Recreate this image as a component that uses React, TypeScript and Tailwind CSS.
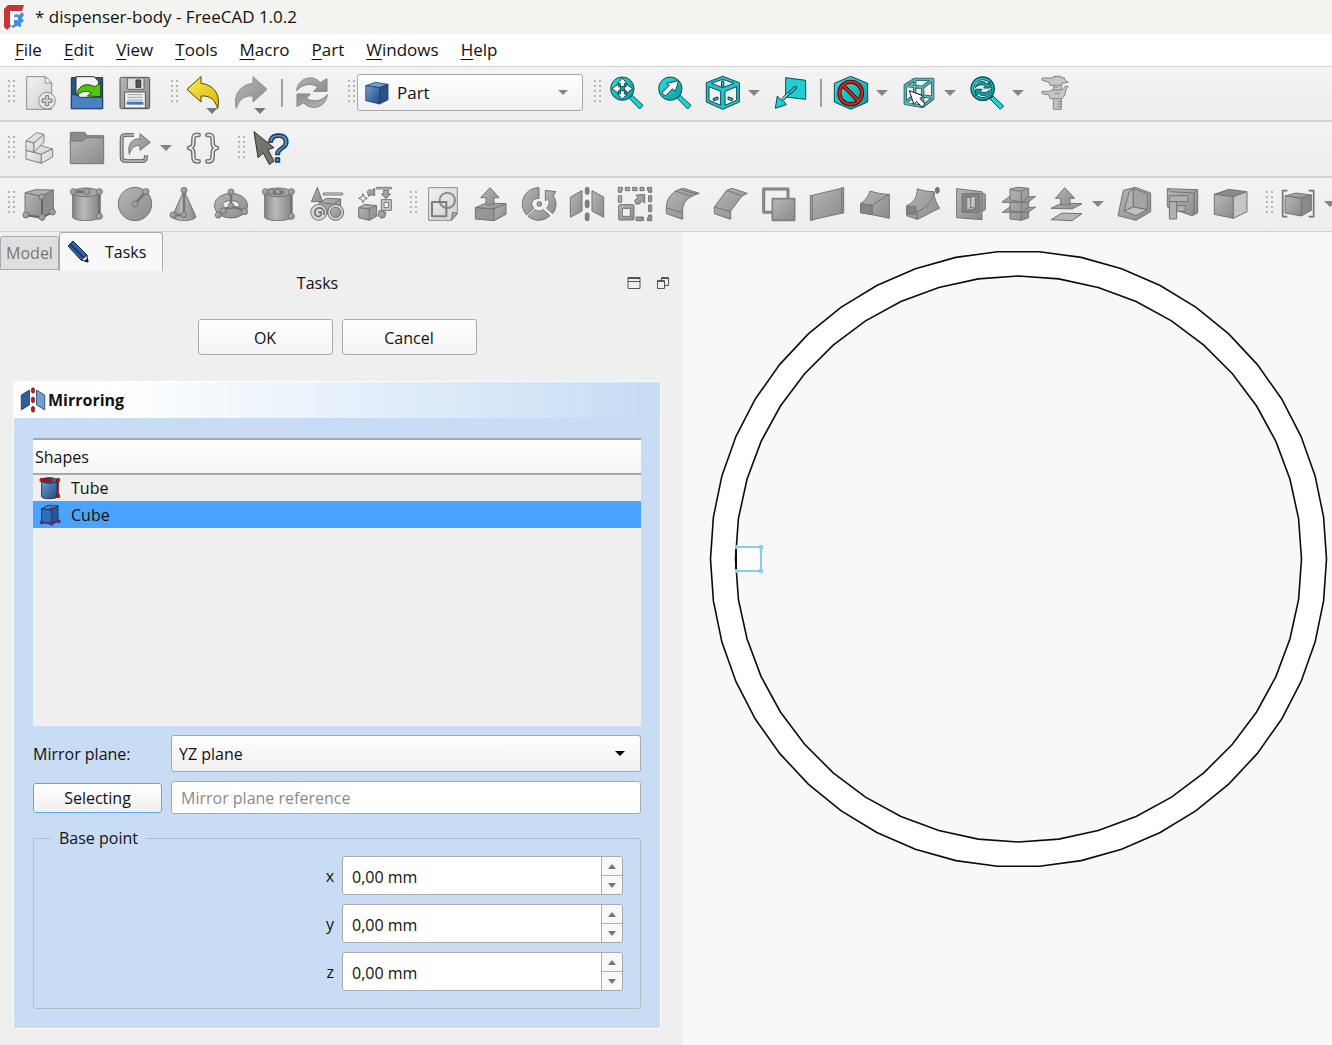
import React, { useState } from 'react';

type IconProps = { children: React.ReactNode; className?: string };

// Every drawing uses a 102 unit grid, three units for each pixel at the toolbar size
const Icon: React.FC<IconProps> = ({ children, className = 'size-[34px]' }) => (
  <svg
    viewBox="0 0 102 102"
    className={`${className} shrink-0 overflow-visible`}
    fill="url(#steel)"
    stroke="#747474"
    strokeWidth={3}
    strokeLinejoin="round"
    aria-hidden="true"
  >
    {children}
  </svg>
);

const Gradients: React.FC = () => (
  <svg className="absolute size-0" aria-hidden="true">
    <defs>
      <linearGradient id="steel" x1="0" y1="0" x2="1" y2="1">
        <stop offset="0" stopColor="#b6b6b6" />
        <stop offset="1" stopColor="#8b8b8b" />
      </linearGradient>
      <linearGradient id="silver" x1="0" y1="0" x2="1" y2="1">
        <stop offset="0" stopColor="#f2f2f2" />
        <stop offset="1" stopColor="#cfcfcf" />
      </linearGradient>
      <linearGradient id="drum" x1="0" y1="0" x2="1" y2="0">
        <stop offset="0" stopColor="#858585" />
        <stop offset="0.4" stopColor="#bababa" />
        <stop offset="1" stopColor="#868686" />
      </linearGradient>
      <linearGradient id="teal" x1="0" y1="0" x2="1" y2="1">
        <stop offset="0" stopColor="#34e0e2" />
        <stop offset="1" stopColor="#06989a" />
      </linearGradient>
      <linearGradient id="blue" x1="0" y1="0" x2="1" y2="1">
        <stop offset="0" stopColor="#6d9ed4" />
        <stop offset="1" stopColor="#23497f" />
      </linearGradient>
      <linearGradient id="gold" x1="0" y1="0" x2="1" y2="1">
        <stop offset="0" stopColor="#fce94f" />
        <stop offset="1" stopColor="#d9b70c" />
      </linearGradient>
    </defs>
  </svg>
);

const TEAL = '#0b4a50';

const lens = (
  <>
    <path d="M58 67L67 58L99 88L89 99Z" fill="#1fd0d2" stroke={TEAL} />
    <circle cx="37" cy="38" r="35" fill="url(#teal)" stroke={TEAL} />
  </>
);

const syncArrow = 'M5 44C8 8 52 -8 76 20L96 8V46H56L68 33C48 20 22 24 5 44Z';

const drum = (
  <>
    <path d="M8 16V90C8 104 88 104 88 90V16Z" fill="url(#drum)" />
    <ellipse cx="48" cy="16" rx="40" ry="13" fill="#a5a5a5" />
  </>
);

const icons: Record<string, React.ReactNode> = {
  newDoc: (
    <>
      <path d="M14 2H70L89 21V100H14Z" fill="url(#silver)" stroke="#8c8c8c" />
      <path d="M70 2V21H89Z" fill="#fff" stroke="#8c8c8c" />
      <circle cx="75" cy="74" r="25" fill="#e9e9e9" stroke="#8c8c8c" />
      <path d="M70 59H80V69H90V79H80V89H70V79H60V69H70Z" fill="#ccc" stroke="#777" />
    </>
  ),
  open: (
    <>
      <path d="M4 5H98V98H4Z" fill="#2c5288" stroke="#1b2f4f" />
      <path d="M18 2H72L86 16V66H18Z" fill="#f4f4f4" stroke="#333" />
      <path d="M4 56H24L30 64H98V98H4Z" fill="#4b80c2" stroke="#1f3f6d" />
      <path d="M20 60C22 30 46 18 74 32L92 22V62L52 60L64 50C48 42 32 46 20 60Z" fill="#4fc50d" stroke="#1d4f00" />
    </>
  ),
  save: (
    <>
      <rect x="6" y="4" width="89" height="94" rx="5" fill="url(#steel)" stroke="#555" />
      <rect x="28" y="6" width="50" height="34" rx="3" fill="#ddd" stroke="#666" />
      <rect x="54" y="12" width="14" height="22" fill="#555" stroke="#333" />
      <rect x="20" y="48" width="62" height="48" fill="#f5f5f5" stroke="#555" />
      <path d="M28 56H74M28 64H74M28 72H74" stroke="#999" />
      <rect x="26" y="77" width="50" height="9" fill="#3c78c4" stroke="none" />
    </>
  ),
  undo: (
    <>
      <path d="M0 40L42 2V22C80 26 102 56 92 97C84 72 70 58 42 60V78Z" fill="url(#gold)" stroke="#4f4300" />
      <path d="M58 96H92L75 114Z" fill="#777" stroke="none" />
    </>
  ),
  redo: (
    <>
      <path d="M96 40L54 2V22C16 26 -6 56 4 97C12 72 26 58 54 60V78Z" fill="url(#steel)" stroke="#8d8d8d" />
      <path d="M58 96H92L75 114Z" fill="#777" stroke="none" />
    </>
  ),
  refresh: (
    <>
      <path d={syncArrow} stroke="#858585" />
      <path d={syncArrow} stroke="#858585" transform="rotate(180 51 50)" />
    </>
  ),
  fitAll: (
    <>
      {lens}
      <path
        d="M37 6L51 22H43V32H49V24L68 38L49 52V44H43V54H51L37 70L23 54H31V44H25V52L6 38L25 24V32H31V22H23Z"
        fill="#fff"
        stroke={TEAL}
      />
      <rect x="31" y="32" width="12" height="12" fill="#16a5a7" stroke={TEAL} />
    </>
  ),
  fitSelection: (
    <>
      {lens}
      <path d="M62 14L52 46L44 38L22 60L12 50L34 28L26 22Z" fill="#fff" stroke={TEAL} />
    </>
  ),
  isometric: (
    <>
      <path d="M50 1L100 20V78L50 100L1 78V20Z" fill="#1fc7ca" stroke={TEAL} />
      <path d="M50 10L84 22L50 35L16 22Z" fill="#f2f2f2" stroke={TEAL} />
      <path d="M9 32L44 46V88L9 73Z" fill="#f2f2f2" stroke={TEAL} />
      <path d="M92 32L57 46V88L92 73Z" fill="#f2f2f2" stroke={TEAL} />
      <path d="M50 18V30M25 70L33 67M69 67L77 70" stroke={TEAL} strokeWidth="10" strokeLinecap="round" />
      <path d="M50 18V30M25 70L33 67M69 67L77 70" stroke="#1fc7ca" strokeWidth="4" strokeLinecap="round" />
    </>
  ),
  linkPlane: (
    <>
      <path d="M35 5L95 13V70L35 63Z" fill="#20cfd2" stroke={TEAL} />
      <path d="M64 35L48 50" stroke={TEAL} strokeWidth="11" strokeLinecap="round" />
      <path d="M64 35L48 50" stroke="#20cfd2" strokeWidth="5" strokeLinecap="round" />
      <path d="M44 52L26 70" stroke={TEAL} strokeWidth="10" />
      <path d="M44 52L26 70" stroke="#8eeeee" strokeWidth="4" />
      <path d="M4 97L10 60L18 69L28 74L37 86Z" fill="#20cfd2" stroke={TEAL} />
    </>
  ),
  noEntry: (
    <>
      <path d="M50 1L101 22V78L50 100L1 78V22Z" fill="url(#teal)" stroke={TEAL} />
      <circle cx="50" cy="51" r="34" fill="none" stroke="#280000" strokeWidth="12" />
      <path d="M27 28L73 74" stroke="#280000" strokeWidth="12" />
      <circle cx="50" cy="51" r="34" fill="none" stroke="#e02020" strokeWidth="7" />
      <path d="M27 28L73 74" stroke="#e02020" strokeWidth="7" />
    </>
  ),
  selectCube: (
    <>
      <g fill="none" stroke="#1e5c60" strokeWidth="10">
        <path d="M10 28L62 34V91L10 82ZM10 28L38 10L92 10L62 34M92 10V68L62 91M38 10V56L10 82M38 56L92 64" />
      </g>
      <g fill="none" stroke="#63b5b5" strokeWidth="5">
        <path d="M10 28L62 34V91L10 82ZM10 28L38 10L92 10L62 34M92 10V68L62 91M38 10V56L10 82M38 56L92 64" />
      </g>
      <path d="M22 44L64 60L54 67L69 84L59 93L44 76L36 86Z" fill="#fff" stroke="#222" />
    </>
  ),
  zoomSync: (
    <>
      <path d="M60 69L69 60L101 90L91 100Z" fill="#1fd0d2" stroke={TEAL} />
      <circle cx="38" cy="38" r="35" fill="url(#teal)" stroke={TEAL} strokeWidth="4" />
      <circle cx="38" cy="38" r="27" fill="#d5f4f4" stroke={TEAL} />
      <g transform="translate(14 14) scale(0.48)" fill="#14a0a3" stroke={TEAL} strokeWidth="6">
        <path d={syncArrow} />
        <path d={syncArrow} transform="rotate(180 51 50)" />
      </g>
    </>
  ),
  caliper: (
    <g fill="#c6c6c6" stroke="#858585">
      <path d="M46 2H70V100H46Z" />
      <path d="M12 6H46L50 1H66L72 7L78 4L82 14L91 18L82 21H72V28H36L32 18L12 13Z" />
      <path d="M12 46H34L38 42H72L82 30L91 32L84 40L80 58L72 68H36L32 56L12 53Z" />
      <path d="M50 34H60M50 52H66M58 76H70M58 84H70M58 92H70" />
    </g>
  ),
  assembly: (
    <g fill="url(#silver)" stroke="#808080">
      <path d="M12 58L50 42L92 54L58 70Z" />
      <path d="M12 58L58 70V97L12 84Z" />
      <path d="M58 70L92 54V78L58 97Z" />
      <path d="M12 30L44 5L66 10L36 36Z" />
      <path d="M12 30L36 36V64L12 58Z" />
      <path d="M36 36L66 10V34L36 64Z" />
    </g>
  ),
  folder: (
    <>
      <path d="M1 4H44L52 14H100V40H1Z" fill="#8a8a8a" />
      <path d="M1 30H38L50 20H101V98H1Z" fill="url(#steel)" />
    </>
  ),
  share: (
    <>
      <path d="M48 12H22C14 12 11 16 11 24V78C11 86 15 90 24 90H72C80 90 84 86 84 78V72" fill="none" strokeWidth="12" />
      <path d="M48 12H22C14 12 11 16 11 24V78C11 86 15 90 24 90H72C80 90 84 86 84 78V72" fill="none" stroke="#bbb" strokeWidth="4" />
      <path d="M34 70C28 42 40 22 66 24V8L97 34L66 58V44C50 42 40 50 34 70Z" />
    </>
  ),
  braces: (
    <g fill="none" strokeLinecap="round">
      <path
        d="M38 12C24 10 22 16 22 26V36C22 44 18 50 9 51C18 52 22 58 22 66V76C22 88 26 92 38 91M64 12C78 10 80 16 80 26V36C80 44 84 50 93 51C84 52 80 58 80 66V76C80 88 76 92 64 91"
        strokeWidth="14"
      />
      <path
        d="M38 12C24 10 22 16 22 26V36C22 44 18 50 9 51C18 52 22 58 22 66V76C22 88 26 92 38 91M64 12C78 10 80 16 80 26V36C80 44 84 50 93 51C84 52 80 58 80 66V76C80 88 76 92 64 91"
        stroke="#eee"
        strokeWidth="5"
      />
    </g>
  ),
  whatsThis: (
    <>
      <path d="M0 2L60 50L42 56L60 90L46 101L28 66L12 80Z" fill="#74746e" stroke="#33332f" />
      <text
        x="39"
        y="94"
        className="font-['Liberation_Sans',sans-serif] text-[120px] font-normal"
        fill="#5d92cf"
        stroke="#16325a"
        strokeWidth="4"
      >
        ?
      </text>
    </>
  ),
  box: (
    <>
      <path d="M9 17L40 8L94 9L60 28Z" fill="#b0b0b0" />
      <path d="M9 17L60 28V94L9 84Z" />
      <path d="M60 28L94 9V72L60 94Z" fill="#8f8f8f" />
      <path d="M60 30V92M12 84L60 92L92 75" fill="none" stroke="#666" strokeWidth="6" />
      <circle cx="12" cy="84" r="9" />
      <circle cx="60" cy="91" r="9" />
      <circle cx="91" cy="75" r="9" />
      <circle cx="60" cy="30" r="9" />
    </>
  ),
  cylinder: (
    <>
      {drum}
      <path d="M10 14H50M88 14V88" strokeWidth="9" />
      <circle cx="10" cy="14" r="9" />
      <circle cx="50" cy="14" r="9" />
      <circle cx="88" cy="14" r="9" />
      <circle cx="88" cy="88" r="9" />
    </>
  ),
  sphere: (
    <>
      <circle cx="51" cy="51" r="50" />
      <path d="M51 51L84 14" strokeWidth="8" />
      <circle cx="51" cy="51" r="9" />
      <circle cx="84" cy="14" r="9" />
    </>
  ),
  cone: (
    <>
      <path d="M54 10L90 90C82 104 28 104 18 90Z" fill="url(#drum)" />
      <path d="M54 12V84H21" fill="none" strokeWidth="7" />
      <circle cx="54" cy="10" r="9" />
      <circle cx="54" cy="84" r="9" />
      <circle cx="21" cy="84" r="9" />
    </>
  ),
  torus: (
    <>
      <ellipse cx="51" cy="56" rx="50" ry="37" />
      <ellipse cx="51" cy="53" rx="25" ry="12" fill="#eee" />
      <path d="M51 15V56L98 74M51 56L28 72L14 84" fill="none" strokeWidth="7" />
      <circle cx="51" cy="15" r="9" />
      <circle cx="51" cy="56" r="8" />
      <circle cx="92" cy="74" r="9" />
      <circle cx="28" cy="72" r="9" />
      <circle cx="13" cy="84" r="9" />
    </>
  ),
  tube: (
    <>
      {drum}
      <ellipse cx="48" cy="16" rx="18" ry="7" fill="#777" />
      <path d="M88 14V88M10 14H50" strokeWidth="8" />
      <circle cx="10" cy="14" r="9" />
      <circle cx="28" cy="14" r="8" />
      <circle cx="48" cy="14" r="8" />
      <circle cx="88" cy="14" r="9" />
      <circle cx="88" cy="88" r="9" />
    </>
  ),
  primitives: (
    <>
      <path d="M22 1L38 44H4Z" />
      <path d="M40 18H98V24H40Z" fill="#ddd" />
      <path d="M28 46L50 34L92 36V80H28Z" />
      <path d="M28 46L72 52L92 36" fill="none" />
      <circle cx="26" cy="76" r="24" fill="#d5d5d5" />
      <path d="M26 78C32 68 40 82 28 88C14 92 8 70 24 63C38 60 46 74 42 84" fill="none" strokeWidth="5" />
      <circle cx="77" cy="76" r="24" fill="#aaa" />
      <circle cx="77" cy="76" r="19" fill="#aaa" stroke="#e6e6e6" strokeWidth="4" />
      <circle cx="77" cy="76" r="16" />
    </>
  ),
  shapeBuilder: (
    <>
      <path d="M2 62L20 52L56 56V88L34 100L2 92Z" />
      <path d="M2 62L34 66L56 56M34 66V100" fill="none" />
      <path d="M15 20L19 30L28 34L19 38L15 47L11 38L2 34L11 30Z" fill="#f2f2f2" />
      <path d="M28 14L34 7L40 11L50 4L50 26L41 23L32 28Z" />
      <path d="M56 1H100V6H56Z" fill="#ddd" />
      <path d="M77 10H91V21H98L84 35L70 21H77Z" />
      <path d="M70 38H100V70H70Z" fill="#ccc" />
      <path d="M78 46H92V62H78Z" fill="#f2f2f2" />
      <path d="M64 70L84 76L80 90L70 94L60 86Z" />
    </>
  ),
  sketch: (
    <>
      <path d="M8 2H94V80L76 100H8Z" fill="url(#silver)" stroke="#8a8a8a" />
      <path d="M94 80L76 100L80 76Z" fill="#aaa" />
      <circle cx="64" cy="40" r="23" fill="none" stroke="#8a8a8a" strokeWidth="6" />
      <rect x="18" y="45" width="43" height="43" fill="none" stroke="#7d7d7d" strokeWidth="6" />
    </>
  ),
  extrude: (
    <>
      <path d="M4 62L36 48L96 50L60 66Z" />
      <path d="M4 62L60 66V101L4 96Z" fill="#969696" />
      <path d="M60 66L96 50V82L60 101Z" />
      <path d="M48 2L75 32H60V54H36V32H20Z" />
    </>
  ),
  revolve: (
    <>
      <path d="M51 2C20 2 1 26 1 50C1 64 6 76 14 84L36 64C30 58 28 52 30 46C32 38 40 34 51 34Z" />
      <path d="M18 88C38 104 64 104 84 86L64 68C54 74 48 74 40 68Z" />
      <path d="M92 80C104 64 106 46 94 26L102 14L70 10L70 42L78 34C84 46 82 54 74 64Z" />
      <circle cx="52" cy="51" r="7" />
    </>
  ),
  mirror: (
    <>
      <path d="M1 30L36 11V72L1 91Z" />
      <path d="M101 30L66 11V72L101 91Z" />
      <rect x="46" y="1" width="11" height="21" rx="5" fill="#808080" />
      <rect x="46" y="39" width="11" height="23" rx="5" fill="#808080" />
      <rect x="46" y="78" width="11" height="23" rx="5" fill="#808080" />
    </>
  ),
  scale: (
    <>
      <path d="M1 1H13V10H10V16H1ZM22 1H35V11H22ZM44 1H57V11H44ZM66 1H78V11H66ZM88 1H101V16H92V10H88Z" />
      <path d="M1 26H11V46H1ZM92 26H101V44H92ZM92 54H101V74H92ZM88 101V92H92V84H101V101ZM54 90H76V101H54Z" />
      <rect x="2" y="53" width="46" height="46" rx="3" />
      <rect x="13" y="64" width="24" height="24" fill="#eee" />
      <path d="M80 22V48L73 42L64 51L54 51L50 40L60 33L54 24Z" />
    </>
  ),
  fillet: (
    <>
      <path d="M1 62C1 32 22 10 52 4L100 19C72 26 52 42 50 66V97L1 80Z" />
      <path d="M1 62L50 78M26 12L80 28M40 7L92 21" fill="none" />
    </>
  ),
  chamfer: (
    <>
      <path d="M1 60L38 10L54 4L100 19L84 27L50 72V97L1 80Z" />
      <path d="M1 60L50 74M38 10L84 27" fill="none" />
    </>
  ),
  face: (
    <>
      <path d="M5 6H78V76H5Z" fill="none" stroke="#767676" strokeWidth="9" />
      <path d="M5 6H78V76H5Z" fill="none" stroke="#999" strokeWidth="3" />
      <rect x="31" y="35" width="67" height="65" stroke="#808080" strokeWidth="5" />
    </>
  ),
  ruled: (
    <>
      <path d="M3 26L98 3V78L3 99Z" />
      <path d="M1 26H7V100H1ZM95 2H101V78H95Z" />
    </>
  ),
  loft: (
    <>
      <path d="M8 50C20 42 32 28 36 12C54 18 74 22 94 22V94L42 83L8 77Z" />
      <path d="M8 50L42 55L94 22M42 55V83" fill="none" />
      <path d="M8 50L42 55V83L8 77Z" fill="#858585" />
    </>
  ),
  sweep: (
    <>
      <path d="M2 56C26 46 34 26 34 5C50 12 68 14 84 14C84 34 92 50 101 64C84 70 56 88 34 97L2 86Z" />
      <path d="M34 97V74L2 60M34 74C60 64 80 42 84 14" fill="none" />
      <rect x="5" y="58" width="24" height="24" fill="#858585" />
      <ellipse cx="94" cy="10" rx="6" ry="9" fill="#777" />
    </>
  ),
  section: (
    <>
      <path d="M76 14L94 22V68L76 78Z" />
      <path d="M8 5L84 14V98L8 92Z" />
      <path d="M24 20H76V76H24Z" fill="#858585" />
      <path d="M38 32L64 28V64L38 72Z" fill="#c4c4c4" />
      <path d="M38 72L50 60L64 64M50 60V30" fill="none" />
    </>
  ),
  crossSections: (
    <>
      <path d="M24 6L48 1L80 4V92L58 100L24 96Z" />
      <path d="M24 8L58 13L80 4M58 13V100" fill="none" />
      <path d="M1 44L24 28V38L58 46L80 30L101 28L78 46H1Z" />
      <path d="M1 76L24 60V70L58 76L80 62L101 60L78 76H1Z" />
    </>
  ),
  offset: (
    <>
      <path d="M3 64L36 48L96 50L66 66Z" />
      <path d="M3 98L36 78L96 80L66 101Z" fill="#b5b5b5" />
      <path d="M44 2L74 34H60V54H32V34H16Z" />
    </>
  ),
  thickness: (
    <>
      <path d="M0 86L16 10L52 1L98 18V74L54 100Z" />
      <path d="M18 72L34 14L46 5V60Z" fill="#b4b4b4" />
      <path d="M46 5L88 20V68L46 60Z" fill="#a4a4a4" />
      <path d="M18 72L46 60L88 68L54 86Z" fill="#c2c2c2" />
    </>
  ),
  partDesign: (
    <>
      <path d="M4 5L95 8V78L78 86L4 60Z" />
      <path d="M4 5L14 14L84 18V84M84 18L95 8" fill="none" />
      <g fill="#b0b0b0">
        <rect x="10" y="26" width="56" height="18" />
        <rect x="10" y="44" width="22" height="52" />
        <rect x="32" y="56" width="26" height="17" />
      </g>
    </>
  ),
  solid: (
    <>
      <path d="M1 22L44 7L99 14L58 29Z" fill="#8b8b8b" />
      <path d="M1 22L58 29V94L1 82Z" />
      <path d="M58 29L99 14V74L58 94Z" fill="#c6c6c6" />
    </>
  ),
  bracketCube: (
    <>
      <path d="M16 11H2V89H16M80 11H95V89H80" fill="none" strokeWidth="5" />
      <path d="M9 27L42 18L88 24L58 34Z" />
      <path d="M9 27L58 34V87L9 78Z" />
      <path d="M58 34L88 24V70L58 87Z" fill="#8b8b8b" />
    </>
  ),
};

const blueCube = (
  <g stroke="#1b3556">
    <path d="M3 20L44 5L98 14L62 28Z" fill="#6f9cce" />
    <path d="M3 20L62 28V98L3 84Z" fill="url(#blue)" />
    <path d="M62 28L98 14V80L62 98Z" fill="#2a5187" />
  </g>
);

const tubeIcon = (
  <g stroke="#16263f" strokeWidth="4">
    <path d="M12 16V90C12 104 84 104 84 90V16Z" fill="url(#blue)" />
    <ellipse cx="48" cy="16" rx="36" ry="13" fill="#3d6aa5" />
    <path d="M88 14V88M12 14H50" stroke="#a00" strokeWidth="8" />
    <g fill="#e01b24" stroke="#600">
      <circle cx="12" cy="14" r="8" />
      <circle cx="32" cy="14" r="8" />
      <circle cx="52" cy="14" r="8" />
      <circle cx="88" cy="14" r="8" />
      <circle cx="88" cy="88" r="8" />
    </g>
  </g>
);

const cubeIcon = (
  <g stroke="#16325f" strokeWidth="4">
    <path d="M12 22L42 6L88 8L58 28Z" fill="#4385cc" />
    <path d="M12 22L58 28V92L12 82Z" fill="#2e6fb9" />
    <path d="M58 28L88 8V74L58 92Z" fill="#24589c" />
    <path d="M58 24V92M12 86L58 92L90 80" fill="none" stroke="#5d2a6d" strokeWidth="7" />
    <g fill="#9a2a5c" stroke="#5d1b4d">
      <circle cx="12" cy="86" r="7" />
      <circle cx="58" cy="92" r="7" />
      <circle cx="92" cy="80" r="7" />
      <circle cx="58" cy="24" r="7" />
    </g>
  </g>
);

const mirrorColor = (
  <>
    <g stroke="#16263f">
      <path d="M1 30L36 9V72L1 93Z" fill="#2f5f9f" />
      <path d="M101 30L66 9V72L101 93Z" fill="#6f9fd4" />
    </g>
    <g fill="#cc1f1f" stroke="#5d0000">
      <rect x="45" y="0" width="12" height="21" rx="5" />
      <rect x="45" y="39" width="12" height="23" rx="5" />
      <rect x="45" y="79" width="12" height="23" rx="5" />
    </g>
  </>
);

const Tool: React.FC<{ name: string }> = ({ name }) => (
  <button type="button" aria-label={name} className="flex h-11 w-12 shrink-0 items-center justify-center">
    <Icon>{icons[name]}</Icon>
  </button>
);

const Handle: React.FC<{ className?: string }> = ({ className = 'w-5 pr-0.5' }) => (
  <div className={`flex shrink-0 justify-end ${className}`}>
    <svg viewBox="0 0 7 25" className="h-[25px] w-[7px]" fill="#b4b4b4" aria-hidden="true">
      {[0, 5, 10, 15, 20].map((y) => (
        <g key={y}>
          <rect x="0" y={y} width="2" height="2" />
          <rect x="5" y={y} width="2" height="2" />
        </g>
      ))}
    </svg>
  </div>
);

const Drop: React.FC = () => (
  <button type="button" aria-label="More" className="flex h-11 w-5 shrink-0 items-center pl-px">
    <svg viewBox="0 0 12 6" className="h-1.5 w-3" fill="#858585" aria-hidden="true">
      <path d="M0 0H12L6 6Z" />
    </svg>
  </button>
);

const Divider: React.FC = () => (
  <div className="flex w-3 shrink-0 justify-center">
    <div className="h-7 w-0.5 bg-[#a0a0a0]" />
  </div>
);

// "|" starts a new handle, "||" a wider one, "v" adds a drop-down arrow, "/" a dividing line
const Tools: React.FC<{ items: string[] }> = ({ items }) => (
  <>
    {items.map((item, i) => {
      if (item === '|') return <Handle key={i} />;
      if (item === '||') return <Handle key={i} className="w-[21px] pr-0.5" />;
      if (item === 'v') return <Drop key={i} />;
      if (item === '/') return <Divider key={i} />;
      return <Tool key={i} name={item} />;
    })}
  </>
);

const barClass =
  'flex items-center overflow-hidden border-[#d2d2d2] bg-linear-to-b from-[#f3f3f3] to-[#ededed] pb-0.5';

const menus = ['File', 'Edit', 'View', 'Tools', 'Macro', 'Part', 'Windows', 'Help'];

const row1a = ['newDoc', 'open', 'save', '||', 'undo', 'redo', '/', 'refresh', '||'];
const row1b = ['|', 'fitAll', 'fitSelection', 'isometric', 'v', 'linkPlane', '/', 'noEntry', 'v', 'selectCube', 'v', 'zoomSync', 'v', 'caliper'];
const row2 = ['assembly', 'folder', 'share', 'v', 'braces', '|', 'whatsThis'];
const row3 = [
  'box', 'cylinder', 'sphere', 'cone', 'torus', 'tube', 'primitives', 'shapeBuilder', '|',
  'sketch', 'extrude', 'revolve', 'mirror', 'scale', 'fillet', 'chamfer', 'face', 'ruled', 'loft',
  'sweep', 'section', 'crossSections', 'offset', 'v', 'thickness', 'partDesign', 'solid', '|', 'bracketCube', 'v',
];

const Header: React.FC = () => (
  <header>
    <div className="flex h-[34px] items-center gap-2.5 bg-[#f3f3ef] pl-1 text-[17px]">
      <svg viewBox="0 0 21 25" className="h-[25px] w-[21px]" aria-hidden="true">
        <path d="M0 4L4 0H20L18 6H7V21L3 25L0 22Z" fill="#cb333b" />
        <path d="M12 9L15 10L18 7L20 10L18 13L20 16L17 18L17 22L13 21L8 23V12Z" fill="#418fde" />
        <g fill="#fff">
          <rect x="6" y="6" width="9" height="3" />
          <rect x="6" y="6" width="4" height="14" />
          <rect x="9" y="12" width="5" height="3" />
        </g>
      </svg>
      <span>* dispenser-body - FreeCAD 1.0.2</span>
    </div>
    <nav className="flex h-8 items-center gap-[22px] bg-white pl-[15px] text-[17px]">
      {menus.map((menu) => (
        <button key={menu} type="button">
          <span className="underline underline-offset-3">{menu[0]}</span>
          {menu.slice(1)}
        </button>
      ))}
    </nav>
    <div className={`${barClass} h-14 border-t border-b-2`}>
      <Handle className="w-[15px]" />
      <Tools items={row1a} />
      <div className="relative shrink-0">
        <select
          aria-label="Workbench"
          className="block h-[37px] w-[226px] appearance-none rounded-[3px] border border-[#a9a9a9] bg-linear-to-b from-white to-[#f1f1f1] pl-[39px] text-[17px]"
        >
          <option>Part</option>
        </select>
        <div className="pointer-events-none absolute inset-0 flex items-center justify-between pr-[15px] pl-2">
          <Icon className="size-6">{blueCube}</Icon>
          <svg viewBox="0 0 10 5" className="h-[5px] w-2.5" fill="#858585" aria-hidden="true">
            <path d="M0 0H10L5 5Z" />
          </svg>
        </div>
      </div>
      <Tools items={row1b} />
    </div>
    <div className={`${barClass} h-[55px] border-b`}>
      <Handle className="w-[15px]" />
      <Tools items={row2} />
    </div>
    <div className={`${barClass} h-[55px] border-y`}>
      <Handle className="w-[15px]" />
      <Tools items={row3} />
    </div>
  </header>
);

const Spin: React.FC<{ axis: string }> = ({ axis }) => {
  const [value, setValue] = useState('0,00 mm');
  return (
    <div className="flex items-center justify-end gap-2">
      <label htmlFor={`base-${axis}`}>{axis}</label>
      <div className="flex h-[39px] w-[281px] overflow-hidden rounded-[3px] border border-[#a9a9a9] bg-white">
        <input
          id={`base-${axis}`}
          value={value}
          onChange={(e) => setValue(e.target.value)}
          className="min-w-0 flex-1 bg-transparent pt-0.5 pl-[9px] outline-none"
        />
        <div className="flex w-[21px] flex-col divide-y divide-[#b0b0b0] border-l border-[#b0b0b0] bg-[#f8f8f8]">
          <button type="button" aria-label={`Increase ${axis}`} className="flex flex-1 items-center justify-center">
            <svg viewBox="0 0 8 5" className="h-[5px] w-2" fill="#777" aria-hidden="true">
              <path d="M0 5H8L4 0Z" />
            </svg>
          </button>
          <button type="button" aria-label={`Decrease ${axis}`} className="flex flex-1 items-center justify-center">
            <svg viewBox="0 0 8 5" className="h-[5px] w-2" fill="#777" aria-hidden="true">
              <path d="M0 0H8L4 5Z" />
            </svg>
          </button>
        </div>
      </div>
    </div>
  );
};

const shapes = [
  { name: 'Tube', icon: tubeIcon },
  { name: 'Cube', icon: cubeIcon },
];

const MirrorTask: React.FC = () => {
  const [selected, setSelected] = useState('Cube');

  return (
    <section className="mx-[13px] mt-[26px] overflow-hidden rounded-[3px] border border-white bg-[#c8ddf3]">
      <h2 className="flex h-9 items-center gap-[3px] bg-linear-to-r from-white from-15% to-[#c6dcf4] pl-[7px] font-bold">
        <Icon className="size-6">{mirrorColor}</Icon>
        Mirroring
      </h2>
      <div className="px-[19px] pt-5 pb-[19px]">
        <div className="h-[288px] bg-[#efefef]">
          <table className="w-full border-collapse">
            <thead>
              <tr>
                <th className="h-[35px] border-y-2 border-[#a6aaae] bg-linear-to-b from-white to-[#f5f5f5] pl-0.5 text-left font-normal">
                  Shapes
                </th>
              </tr>
            </thead>
            <tbody>
              {shapes.map(({ name, icon }) => (
                <tr key={name} onClick={() => setSelected(name)} className={selected === name ? 'bg-[#4aa4ff]' : ''}>
                  <td className="h-[27px] p-0 pl-1.5">
                    <div className="flex items-center gap-2.5">
                      <Icon className="size-[22px]">{icon}</Icon>
                      {name}
                    </div>
                  </td>
                </tr>
              ))}
            </tbody>
          </table>
        </div>
        <div className="mt-[9px] grid grid-cols-[129px_1fr] items-center gap-x-[9px] gap-y-[9px]">
          <label htmlFor="plane">Mirror plane:</label>
          <div className="relative">
            <select
              id="plane"
              className="block h-[37px] w-full appearance-none rounded-[3px] border border-[#a9a9a9] bg-linear-to-b from-white to-[#efefef] pl-[7px]"
            >
              <option>YZ plane</option>
              <option>XY plane</option>
              <option>XZ plane</option>
            </select>
            <div className="pointer-events-none absolute inset-y-0 right-4 flex items-center">
              <svg viewBox="0 0 10 5" className="h-[5px] w-2.5" aria-hidden="true">
                <path d="M0 0H10L5 5Z" />
              </svg>
            </div>
          </div>
          <button
            type="button"
            className="h-[30px] rounded-[3px] border border-[#5aa9f0] bg-linear-to-b from-white to-[#f0f0f0]"
          >
            Selecting
          </button>
          <input
            aria-label="Mirror plane reference"
            placeholder="Mirror plane reference"
            className="h-[33px] w-full rounded-[3px] border border-[#a9a9a9] bg-white pl-[9px] placeholder:text-[#8a8a8a]"
          />
        </div>
        <fieldset className="mt-3 rounded-[3px] border border-[#b3bcc6] px-[17px] pb-[17px]">
          <legend className="h-6 px-2 leading-6">Base point</legend>
          <div className="mt-1.5 flex flex-col gap-[9px]">
            <Spin axis="x" />
            <Spin axis="y" />
            <Spin axis="z" />
          </div>
        </fieldset>
      </div>
    </section>
  );
};

const TaskPanel: React.FC = () => (
  <aside className="w-[683px] shrink-0 bg-[#efefef] pr-[9px] text-base">
    <div className="flex items-end">
      <button
        type="button"
        className="mb-px h-[34px] w-[59px] rounded-t-[3px] border border-[#a9a9a9] bg-[#dfdfdf] text-[#777]"
      >
        Model
      </button>
      <button
        type="button"
        className="flex h-[39px] w-[104px] items-center gap-3.5 rounded-t-[3px] border border-b-0 border-[#a9a9a9] bg-[#f8f8f8] pl-[7px]"
      >
        <svg viewBox="0 0 24 24" className="size-6" stroke="#14243c" aria-hidden="true">
          <path d="M6 1L1 6L14 20L20 15Z" fill="#3465a4" />
          <path d="M3 4L17 18" stroke="#1c3a66" strokeWidth="2" />
          <path d="M20 15L21 22L14 20Z" fill="#d8d8d8" />
          <path d="M20 19L21 22L18 21Z" fill="#111" />
        </svg>
        Tasks
      </button>
    </div>
    <div className="flex h-6 items-center">
      <h1 className="flex-1 pl-2 text-center">Tasks</h1>
      <div className="flex gap-[15px] pr-1">
        <button type="button" aria-label="Collapse">
          <svg viewBox="0 0 14 14" className="size-3.5" fill="none" stroke="#555" aria-hidden="true">
            <path d="M1 1.5H13V12.5H1ZM1 5.5H13" />
            <path d="M1 2H13" strokeWidth="2" />
          </svg>
        </button>
        <button type="button" aria-label="Float">
          <svg viewBox="0 0 14 14" className="size-3.5" fill="#efefef" stroke="#555" aria-hidden="true">
            <path d="M5.5 1.5H12.5V9.5H5.5ZM5.5 2.5H12.5" />
            <path d="M1.5 4.5H8.5V12.5H1.5ZM1.5 5.5H8.5" />
          </svg>
        </button>
      </div>
    </div>
    <div className="mt-6 flex justify-center gap-[9px]">
      {['OK', 'Cancel'].map((label) => (
        <button
          key={label}
          type="button"
          className="h-9 w-[135px] rounded-[3px] border border-[#a9a9a9] bg-linear-to-b from-white to-[#f3f3f3] pt-0.5"
        >
          {label}
        </button>
      ))}
    </div>
    <MirrorTask />
  </aside>
);

const ring = (r: number, sides: number) =>
  Array.from({ length: sides }, (_, i) => {
    const a = (i * 2 * Math.PI) / sides;
    return `${(335.5 + r * Math.cos(a)).toFixed(1)},${(327 + r * Math.sin(a)).toFixed(1)}`;
  }).join(' ');

const Viewport: React.FC = () => (
  <main className="min-w-0 flex-1 bg-[#f8f8f8]">
    <svg viewBox="0 0 649 813" className="w-full" stroke="#0c0c0c" strokeWidth={2} role="img" aria-label="Top view">
      <polygon points={ring(308, 46)} fill="#fff" strokeWidth={1.6} />
      <polygon points={ring(283, 44)} fill="#f8f8f8" strokeWidth={1.6} />
      <rect x="54" y="315" width="24" height="25" fill="#fdfdfd" stroke="none" />
      <path d="M53 315H78V339H53" fill="none" stroke="#8accf2" />
      <path d="M53 315V339" />
      <g fill="#8accf2" stroke="none">
        <rect x="52" y="313" width="3" height="4" />
        <rect x="76" y="313" width="4" height="4" />
        <rect x="52" y="337" width="3" height="4" />
        <rect x="76" y="337" width="4" height="4" />
      </g>
    </svg>
  </main>
);

const App: React.FC = () => (
  <div className="flex min-h-screen flex-col bg-[#efefef] font-['Open_Sans','Noto_Sans',sans-serif] text-[#111]">
    <Gradients />
    <Header />
    <div className="flex flex-1">
      <TaskPanel />
      <Viewport />
    </div>
  </div>
);

export default App;
